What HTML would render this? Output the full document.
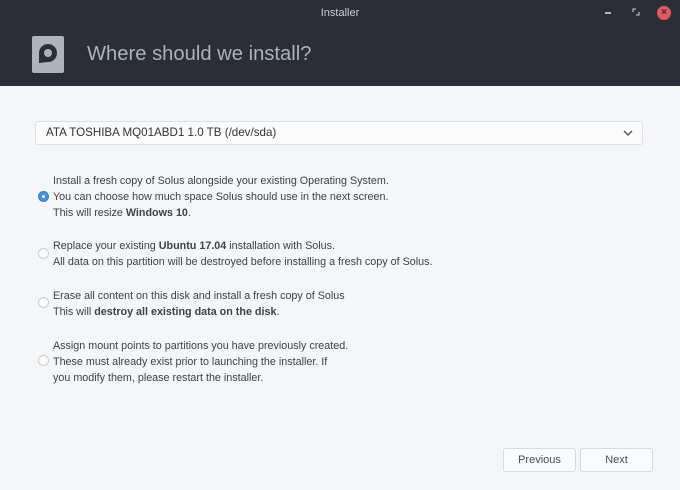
<!DOCTYPE html>
<html><head><style>
body{margin:0;width:680px;height:490px;background:#f5f6f7;font-family:"Liberation Sans",sans-serif;position:relative;overflow:hidden;color:#3a3d42}
.hdr{position:absolute;left:0;top:0;width:680px;height:86px;background:#2b2e37}
.tt{position:absolute;top:7px;width:680px;text-align:center;color:#c9ccd1;font-size:11px}
.title{position:absolute;left:87px;top:43px;color:#aab2bd;font-size:20.2px}
.logo{position:absolute;left:32px;top:36px;width:32px;height:37px;background:#aeb4be;border-radius:2px}
.sel{position:absolute;left:35px;top:121px;width:608px;height:24px;background:#fbfbfc;border:1px solid #dcdfe3;border-radius:3px;font-size:11.6px;line-height:22px;box-sizing:border-box;padding-left:10px;color:#333}
.opt{position:absolute;left:53px;font-size:10.75px;line-height:16px;color:#3e4145}
.r{position:absolute;left:38px;width:11px;height:11px;border-radius:50%;border:1px solid #c9ccd0;background:#fbfbfb;box-sizing:border-box}
.btn{position:absolute;top:448px;height:24px;background:#fafbfc;border:1px solid #d6d9dd;border-radius:3px;box-sizing:border-box;text-align:center;font-size:11px;line-height:22px;color:#4a4d52}
</style></head><body>
<div class="hdr"></div>
<div class="tt">Installer</div>
<div style="position:absolute;left:605px;top:12px;width:6px;height:2px;background:#aeb3bb"></div>
<svg style="position:absolute;left:632px;top:8px" width="8" height="8"><path d="M1 4 L1 1 L4 1 M7 4 L7 7 L4 7" stroke="#aeb3bb" stroke-width="1.3" fill="none"/></svg>
<div style="position:absolute;left:657px;top:6px;width:14px;height:14px;border-radius:50%;background:#e05a5f;color:#3a2a2e;font-size:10px;line-height:14px;text-align:center;font-weight:bold">×</div>
<div class="logo"><svg width="32" height="37"><path d="M7 27 L7 17 A9 9 0 1 1 16 26 Z" fill="#2b2e37"/><circle cx="16" cy="17" r="4" fill="#aeb4be"/></svg></div>
<div class="title">Where should we install?</div>
<div class="sel">ATA TOSHIBA MQ01ABD1 1.0 TB (/dev/sda)<svg style="position:absolute;right:9px;top:8px" width="10" height="7"><path d="M1 1 L5 5 L9 1" stroke="#555" stroke-width="1.5" fill="none"/></svg></div>
<div class="r" style="top:191px;background:#4a90d9;border-color:#3c7fc9"><div style="width:3px;height:3px;background:#fff;border-radius:50%;margin:3px"></div></div>
<div class="opt" style="top:173px">Install a fresh copy of Solus alongside your existing Operating System.<br>You can choose how much space Solus should use in the next screen.<br>This will resize <b>Windows 10</b>.</div>
<div class="r" style="top:248px"></div>
<div class="opt" style="top:238px">Replace your existing <b>Ubuntu 17.04</b> installation with Solus.<br>All data on this partition will be destroyed before installing a fresh copy of Solus.</div>
<div class="r" style="top:297px"></div>
<div class="opt" style="top:288px">Erase all content on this disk and install a fresh copy of Solus<br>This will <b>destroy all existing data on the disk</b>.</div>
<div class="r" style="top:355px"></div>
<div class="opt" style="top:338px">Assign mount points to partitions you have previously created.<br>These must already exist prior to launching the installer. If<br>you modify them, please restart the installer.</div>
<div class="btn" style="left:503px;width:73px">Previous</div>
<div class="btn" style="left:580px;width:73px">Next</div>
</body></html>
